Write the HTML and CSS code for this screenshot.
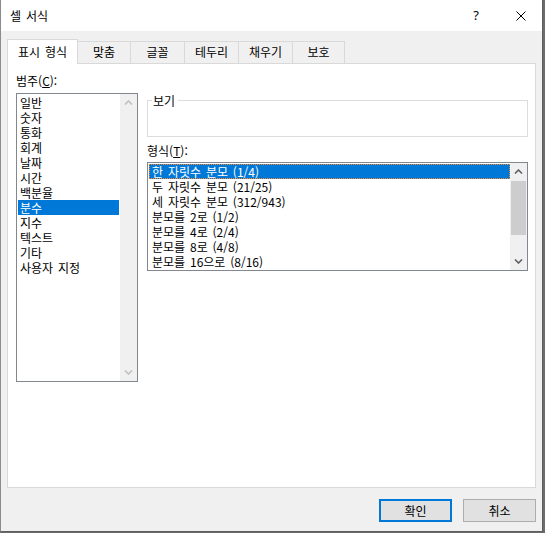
FILE: index.html
```html
<!DOCTYPE html>
<html lang="ko">
<head>
<meta charset="utf-8">
<title>셀 서식</title>
<link rel="stylesheet" href="styles.css">
</head>
<body>
<div class="dialog">
  <div class="titlebar">
    <span class="title">셀 서식</span>
    <span class="help">?</span>
    <span class="close"><svg width="10" height="10" viewBox="0 0 10 10"><path d="M0.5 0.5 L9.5 9.5 M9.5 0.5 L0.5 9.5" stroke="#000" stroke-width="1" fill="none"/></svg></span>
  </div>
  <div class="content">
    <div class="tabs">
      <div class="tab active w1">표시 형식</div>
      <div class="tab w2">맞춤</div>
      <div class="tab w3">글꼴</div>
      <div class="tab w3">테두리</div>
      <div class="tab w3">채우기</div>
      <div class="tab w4">보호</div>
    </div>
    <div class="panel">
      <div class="col-left">
        <div class="label cat-label">범주(<u>C</u>):</div>
        <div class="listbox cat-box">
          <div class="items cat-items">
            <div class="item">일반</div>
            <div class="item">숫자</div>
            <div class="item">통화</div>
            <div class="item">회계</div>
            <div class="item">날짜</div>
            <div class="item">시간</div>
            <div class="item">백분율</div>
            <div class="item selected">분수</div>
            <div class="item">지수</div>
            <div class="item">텍스트</div>
            <div class="item">기타</div>
            <div class="item">사용자 지정</div>
          </div>
          <div class="vscroll disabled">
            <div class="sbtn"><svg width="9" height="5" viewBox="0 0 9 5"><polyline points="1,4.5 4.5,1 8,4.5" fill="none" stroke-width="1.6"/></svg></div>
            <div class="track"></div>
            <div class="sbtn"><svg width="9" height="5" viewBox="0 0 9 5"><polyline points="1,0.5 4.5,4 8,0.5" fill="none" stroke-width="1.6"/></svg></div>
          </div>
        </div>
      </div>
      <div class="col-right">
        <div class="sample"><span class="legend">보기</span></div>
        <div class="label fmt-label">형식(<u>T</u>):</div>
        <div class="listbox fmt-box">
          <div class="items fmt-items">
            <div class="item selected focus">한 자릿수 분모 (1/4)</div>
            <div class="item">두 자릿수 분모 (21/25)</div>
            <div class="item">세 자릿수 분모 (312/943)</div>
            <div class="item">분모를 2로 (1/2)</div>
            <div class="item">분모를 4로 (2/4)</div>
            <div class="item">분모를 8로 (4/8)</div>
            <div class="item">분모를 16으로 (8/16)</div>
          </div>
          <div class="vscroll">
            <div class="sbtn"><svg width="9" height="5" viewBox="0 0 9 5"><polyline points="1,4.5 4.5,1 8,4.5" fill="none" stroke-width="1.6"/></svg></div>
            <div class="track"><div class="thumb"></div></div>
            <div class="sbtn"><svg width="9" height="5" viewBox="0 0 9 5"><polyline points="1,0.5 4.5,4 8,0.5" fill="none" stroke-width="1.6"/></svg></div>
          </div>
        </div>
      </div>
    </div>
    <div class="buttons">
      <button class="btn primary">확인</button>
      <button class="btn">취소</button>
    </div>
  </div>
</div>
</body>
</html>
```

FILE: styles.css
```css
* {
  box-sizing: border-box;
  margin: 0;
  padding: 0;
}

body {
  background: #6b6b6b;
  font-family: "Noto Sans CJK KR", "Noto Sans", sans-serif;
  font-size: 12px;
  word-spacing: 1.5px;
  color: #000;
}

.dialog {
  width: 543px;
  height: 532px;
  background: #f0f0f0;
  border-left: 1px solid #8c8c8c;
  border-right: 1px solid #5e5e5e;
  border-bottom: 1px solid #5e5e5e;
  display: flex;
  flex-direction: column;
}

.titlebar {
  flex: none;
  height: 31px;
  background: #fff;
  display: flex;
  align-items: center;
  padding: 0 16px 0 9px;
}

.title {
  line-height: 15px;
}

.help {
  margin-left: auto;
  width: 8px;
  text-align: center;
  font-family: "Noto Sans", sans-serif;
  font-size: 13px;
  line-height: 15px;
}

.close {
  margin-left: 36px;
  width: 10px;
  height: 10px;
  display: flex;
}

.content {
  flex: 1;
  display: flex;
  flex-direction: column;
  padding: 8px 6px 0 6px;
}

.tabs {
  height: 24px;
  display: flex;
  align-items: flex-end;
}

.tab {
  height: 22px;
  line-height: 20px;
  text-align: center;
  background: #f0f0f0;
  border-top: 1px solid #d9d9d9;
  border-right: 1px solid #d9d9d9;
}

.tab.active {
  height: 25px;
  line-height: 23px;
  background: #fff;
  border-left: 1px solid #d9d9d9;
  margin-bottom: -1px;
  position: relative;
  z-index: 1;
}

.w1 { width: 71px; }
.w2 { width: 53px; }
.w3 { width: 54px; }
.w4 { width: 52px; }

.panel {
  flex: none;
  height: 425px;
  background: #fff;
  border: 1px solid #d9d9d9;
  display: flex;
  gap: 9px;
  padding: 0 7px 0 8px;
}

.col-left {
  width: 122px;
  display: flex;
  flex-direction: column;
}

.col-right {
  width: 381px;
  display: flex;
  flex-direction: column;
}

.label {
  line-height: 15px;
  height: 15px;
}

.cat-label {
  margin-top: 9px;
  margin-bottom: 5px;
}

.listbox {
  border: 1px solid #828790;
  background: #fff;
  display: flex;
}

.cat-box {
  height: 289px;
}

.items {
  flex: 1;
  min-width: 0;
}

.cat-items {
  padding: 1px;
}

.fmt-items {
  padding: 1px 0 1px 1px;
}

.item {
  height: 15px;
  line-height: 15px;
  padding-left: 3px;
  white-space: nowrap;
}

.cat-items .item {
  padding-left: 2px;
}

.item.selected {
  background: #0078d7;
  color: #fff;
}

.item.focus {
  outline: 1px dotted #ff8728;
  outline-offset: -1px;
}

.vscroll {
  width: 17px;
  background: #f0f0f0;
  display: flex;
  flex-direction: column;
  flex: none;
}

.sbtn {
  height: 17px;
  display: flex;
  align-items: center;
  justify-content: center;
  stroke: #606060;
}

.vscroll.disabled .sbtn {
  stroke: #c0c0c0;
}

.track {
  flex: 1;
  padding: 1px 1px 0 1px;
}

.thumb {
  height: 54px;
  background: #cdcdcd;
}

.sample {
  margin-top: 36px;
  height: 37px;
  border: 1px solid #dcdcdc;
  position: relative;
}

.legend {
  position: absolute;
  left: 4px;
  top: -8px;
  line-height: 15px;
  padding: 0 3px 0 1px;
  background: #fff;
}

.fmt-label {
  margin-top: 6px;
  margin-bottom: 4px;
}

.fmt-box {
  height: 109px;
}

.buttons {
  display: flex;
  justify-content: flex-end;
  gap: 11px;
  margin-top: 11px;
}

.btn {
  width: 73px;
  height: 23px;
  background: #e1e1e1;
  border: 1px solid #adadad;
  font-family: "Noto Sans CJK KR", "Noto Sans", sans-serif;
  font-size: 12px;
  color: #000;
  line-height: 15px;
}

.btn.primary {
  border: 2px solid #0078d7;
}
```
